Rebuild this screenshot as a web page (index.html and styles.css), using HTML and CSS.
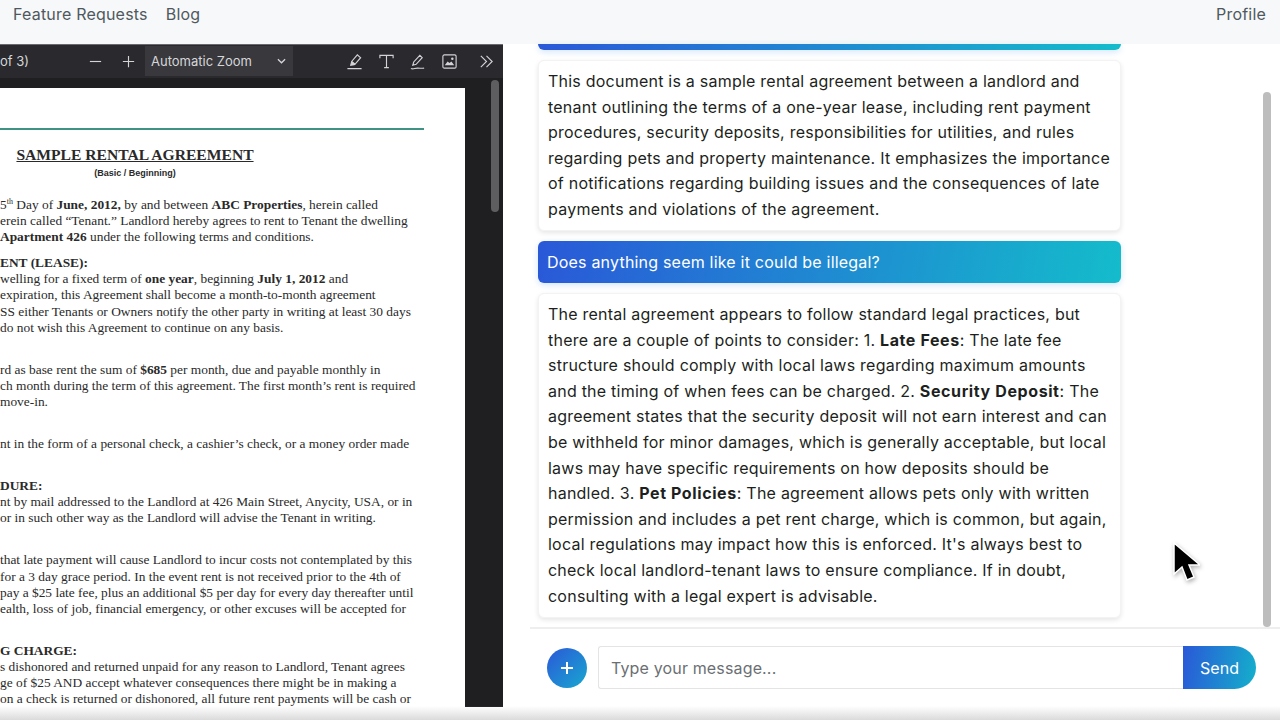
FILE: index.html
```html
<!DOCTYPE html>
<html lang="en">
<head>
  <meta charset="UTF-8">
  <meta name="viewport" content="width=device-width, initial-scale=1.0">
  <title>Chat with PDF</title>
  <link rel="stylesheet" href="styles.css">
</head>
<body>
  <nav class="navbar">
    <div class="nav-links">
      <a>Feature Requests</a>
      <a>Blog</a>
    </div>
    <a>Profile</a>
  </nav>

  <main class="workspace">
    <section class="pdf-panel">
      <div class="pdf-toolbar">
        <span class="page-count">of 3)</span>
        <div class="zoom-buttons">
          <svg class="tool-icon small" viewBox="0 0 16 16"><path d="M2 8h12"/></svg>
          <svg class="tool-icon small" viewBox="0 0 16 16"><path d="M2 8h12M8 2v12"/></svg>
        </div>
        <div class="zoom-select">
          <span>Automatic Zoom</span>
          <svg class="chevron" viewBox="0 0 10 6"><path d="M1 1l4 4 4-4"/></svg>
        </div>
        <div class="editor-tools">
          <svg class="tool-icon" viewBox="0 0 18 18"><path d="M1.500 16.500h15M5 13l1-4 6-7 3.500 3-6 7zM6 9l4 3"/><path class="solid" d="M5 13l1-4 4 3-1 1z"/></svg>
          <svg class="tool-icon" viewBox="0 0 18 18"><path d="M2 5.500V2.500h14v3M9 2.500v13M6.500 15.500h5"/></svg>
          <svg class="tool-icon" viewBox="0 0 18 18"><path d="M2 16.500c3 1 4-.500 7-.500s4 .500 7 0M4 13l1-3.500 6.500-7 2.500 2.500-6.500 7z"/></svg>
          <svg class="tool-icon" viewBox="0 0 18 18"><rect x="2" y="2" width="14" height="14" rx="1.500"/><path class="solid" d="M4 13l3-4 2 1.500 2-1.500 3 4z"/><circle class="solid" cx="12" cy="6" r="1.300"/></svg>
          <svg class="tool-icon more" viewBox="0 0 18 18"><path d="M3 3l6 6-6 6M9 3l6 6-6 6"/></svg>
        </div>
      </div>
      <div class="pdf-viewer">
        <article class="pdf-page">
          <hr class="page-rule">
          <h1 class="doc-title">SAMPLE RENTAL AGREEMENT</h1>
          <p class="doc-sub">(Basic / Beginning)</p>

          <p class="doc-block">5<sup>th</sup> Day of <b>June, 2012,</b> by and between <b>ABC Properties</b>, herein called<br>erein called “Tenant.” Landlord hereby agrees to rent to Tenant the dwelling<br><b>Apartment 426</b> under the following terms and conditions.</p>

          <p class="doc-block gap-sm"><b>ENT (LEASE):</b><br>welling for a fixed term of <b>one year</b>, beginning <b>July 1, 2012</b> and<br>expiration, this Agreement shall become a month-to-month agreement<br>SS either Tenants or Owners notify the other party in writing at least 30 days<br>do not wish this Agreement to continue on any basis.</p>

          <p class="doc-block">rd as base rent the sum of <b>$685</b> per month, due and payable monthly in<br>ch month during the term of this agreement. The first month’s rent is required<br>move-in.</p>

          <p class="doc-block">nt in the form of a personal check, a cashier’s check, or a money order made</p>

          <p class="doc-block"><b>DURE:</b><br>nt by mail addressed to the Landlord at 426 Main Street, Anycity, USA, or in<br>or in such other way as the Landlord will advise the Tenant in writing.</p>

          <p class="doc-block">that late payment will cause Landlord to incur costs not contemplated by this<br>for a 3 day grace period. In the event rent is not received prior to the 4th of<br>pay a $25 late fee, plus an additional $5 per day for every day thereafter until<br>ealth, loss of job, financial emergency, or other excuses will be accepted for</p>

          <p class="doc-block"><b>G CHARGE:</b><br>s dishonored and returned unpaid for any reason to Landlord, Tenant agrees<br>ge of $25 AND accept whatever consequences there might be in making a<br>on a check is returned or dishonored, all future rent payments will be cash or</p>
        </article>
        <div class="pdf-scrollbar"></div>
      </div>
    </section>

    <section class="chat-panel">
      <div class="chat-scroll">
        <div class="messages">
          <div class="msg-user msg-cut"></div>
          <div class="msg-bot msg-first">This document is a sample rental agreement between a landlord and tenant outlining the terms of a one-year lease, including rent payment procedures, security deposits, responsibilities for utilities, and rules regarding pets and property maintenance. It emphasizes the importance of notifications regarding building issues and the consequences of late payments and violations of the agreement.</div>
          <div class="msg-user">Does anything seem like it could be illegal?</div>
          <div class="msg-bot">The rental agreement appears to follow standard legal practices, but there are a couple of points to consider: 1. <b>Late Fees</b>: The late fee structure should comply with local laws regarding maximum amounts and the timing of when fees can be charged. 2. <b>Security Deposit</b>: The agreement states that the security deposit will not earn interest and can be withheld for minor damages, which is generally acceptable, but local laws may have specific requirements on how deposits should be handled. 3. <b>Pet Policies</b>: The agreement allows pets only with written permission and includes a pet rent charge, which is common, but again, local regulations may impact how this is enforced. It's always best to check local landlord-tenant laws to ensure compliance. If in doubt, consulting with a legal expert is advisable.</div>
        </div>
        <div class="chat-scrollbar"></div>
      </div>
      <form class="chat-form">
        <button class="add-btn" type="button">
          <svg viewBox="0 0 14 14"><path d="M7 1v12M1 7h12"/></svg>
        </button>
        <div class="input-group">
          <input class="chat-input" type="text" placeholder="Type your message...">
          <button class="send-btn" type="button">Send</button>
        </div>
      </form>
    </section>
  </main>

  <div class="window-fade"></div>

  <svg class="cursor" viewBox="0 0 28 42">
    <path d="M2 1v31l8-7 5 13 7-3-5-12h11z"/>
  </svg>
</body>
</html>
```

FILE: styles.css
```css
:root {
  --nav-bg: #f6f8f9;
  --nav-text: #50585f;
  --pdf-dark: #2a2a2e;
  --pdf-darker: #1f1f21;
  --blue-grad: linear-gradient(100deg, #2a58d8, #14bccb);
}

* {
  box-sizing: border-box;
}

body {
  margin: 0;
  width: 1280px;
  height: 720px;
  overflow: hidden;
  background-color: #ffffff;
  font-family: Inter, "Noto Sans", sans-serif;
  color: #1d1f21;
}

.navbar {
  display: flex;
  justify-content: space-between;
  height: 44px;
  padding: 3px 14px 0 13px;
  background-color: var(--nav-bg);
  color: var(--nav-text);
  font-size: 16px;
  letter-spacing: 0.2px;
  line-height: 22px;
}

.nav-links {
  display: flex;
  gap: 18px;
}

.workspace {
  display: flex;
  height: 664px;
}

/* pdf viewer */
.pdf-panel {
  display: flex;
  flex-direction: column;
  width: 503px;
  height: 663px;
  background-color: var(--pdf-darker);
}

.pdf-toolbar {
  display: flex;
  align-items: center;
  flex: none;
  height: 34px;
  padding-bottom: 1px;
  background-color: var(--pdf-dark);
  border-top: 1px solid #6a6a6e;
  color: #d6d6d9;
  font-size: 13px;
}

.page-count {
  width: 88px;
}

.zoom-buttons {
  display: flex;
  gap: 18px;
  width: 57px;
}

.tool-icon {
  display: block;
  flex: none;
  width: 17px;
  height: 17px;
  fill: none;
  stroke: #d4d4d7;
  stroke-width: 1.2;
}

.tool-icon.small {
  width: 15px;
  height: 15px;
}

.tool-icon .solid {
  fill: #d4d4d7;
  stroke: none;
}

.zoom-select {
  display: flex;
  align-items: center;
  justify-content: space-between;
  width: 148px;
  height: 30px;
  padding: 0 7px 0 6px;
  background-color: #38383d;
}

.chevron {
  width: 9px;
  height: 6px;
  fill: none;
  stroke: #d6d6d9;
  stroke-width: 1.4;
}

.editor-tools {
  display: flex;
  align-items: center;
  gap: 14.500px;
  margin-left: 53px;
}

.editor-tools .more {
  margin-left: 6px;
}

.pdf-viewer {
  display: flex;
  flex: 1;
  min-height: 0;
  padding-top: 10px;
  position: relative;
}

.pdf-page {
  width: 465px;
  height: 100%;
  overflow: hidden;
  background-color: #ffffff;
  color: #2a2a2a;
  font-family: "Liberation Serif", serif;
  font-size: 13.400px;
  line-height: 16.100px;
  white-space: nowrap;
}

.page-rule {
  width: 424px;
  height: 2px;
  margin: 40px 0 0;
  border: 0;
  background-color: #3f9385;
}

.doc-title {
  width: 270px;
  margin: 16px 0 0;
  font-size: 15.600px;
  line-height: 18px;
  text-align: center;
  text-decoration: underline;
}

.doc-sub {
  width: 270px;
  margin: 3px 0 0;
  font-family: "Liberation Sans", sans-serif;
  font-size: 9px;
  font-weight: bold;
  line-height: 12px;
  text-align: center;
}

.doc-block {
  margin: 26px 0 0;
}

.doc-sub + .doc-block {
  margin-top: 18px;
}

.doc-block.gap-sm {
  margin-top: 10px;
}

.doc-block sup {
  font-size: 8px;
  line-height: 0;
}

.pdf-scrollbar {
  position: absolute;
  top: 2px;
  left: 491px;
  width: 8px;
  height: 132px;
  border-radius: 4px;
  background-color: #5e5e60;
}

/* chat */
.chat-panel {
  display: flex;
  flex-direction: column;
  flex: 1;
  min-width: 0;
}

.chat-scroll {
  display: flex;
  flex: none;
  height: 585px;
  position: relative;
  border-bottom: 2px solid #eeeeee;
  margin-left: 27px;
  padding-left: 8px;
}

.messages {
  display: flex;
  flex-direction: column;
  gap: 10px;
  width: 583px;
}

.msg-user {
  padding: 8px 9px;
  border-radius: 6px;
  background: var(--blue-grad);
  box-shadow: 0 2px 6px rgba(30, 120, 220, 0.2);
  color: #ffffff;
  font-size: 16px;
  letter-spacing: 0.2px;
  line-height: 26px;
}

.msg-cut {
  height: 6px;
  padding: 0;
  border-radius: 0 0 6px 6px;
}

.msg-bot {
  padding: 8px 9px;
  border-radius: 6px;
  background-color: #ffffff;
  border: 1px solid #f3f3f3;
  box-shadow: 0 2px 5px rgba(0, 0, 0, 0.1);
  font-size: 16px;
  letter-spacing: 0.23px;
  line-height: 25.600px;
}

.msg-bot b {
  letter-spacing: 0.6px;
}

.msg-first {
  padding-bottom: 7.500px;
}

.chat-scrollbar {
  position: absolute;
  top: 48px;
  left: 733px;
  width: 8px;
  height: 535px;
  border-radius: 4px;
  background-color: #bdbdbd;
}

.chat-form {
  display: flex;
  align-items: center;
  gap: 11px;
  padding: 17px 24px 0 44px;
}

.add-btn {
  flex: none;
  width: 40px;
  height: 40px;
  padding: 0;
  border: none;
  border-radius: 50%;
  background: linear-gradient(135deg, #2a58d8, #18a8cf);
}

.add-btn svg {
  display: block;
  width: 14px;
  height: 14px;
  margin: 0 auto;
  fill: none;
  stroke: #ffffff;
  stroke-width: 2;
}

.input-group {
  display: flex;
  flex: 1;
  height: 43px;
}

.chat-input {
  flex: 1;
  min-width: 0;
  padding: 0 12px;
  border: 1px solid #e4e4e4;
  border-right: none;
  border-radius: 3px 0 0 3px;
  font-family: inherit;
  font-size: 16px;
  letter-spacing: 0.15px;
  outline: none;
}

.chat-input::placeholder {
  color: #6b6f73;
}

.send-btn {
  flex: none;
  width: 73px;
  padding: 0;
  border: none;
  border-radius: 0 22px 22px 0;
  background: linear-gradient(100deg, #2a58d8, #14b0cb);
  color: #ffffff;
  font-family: inherit;
  font-size: 16px;
}

.window-fade {
  position: absolute;
  left: 0;
  top: 706px;
  width: 1280px;
  height: 14px;
  background: linear-gradient(rgba(225, 225, 225, 0), rgba(215, 215, 215, 0.9));
}

.cursor {
  position: absolute;
  left: 1172px;
  top: 542px;
  width: 28px;
  height: 42px;
  fill: #000000;
  stroke: #ffffff;
  stroke-width: 1.5;
  filter: drop-shadow(1px 2px 2px rgba(0, 0, 0, 0.3));
}
```
